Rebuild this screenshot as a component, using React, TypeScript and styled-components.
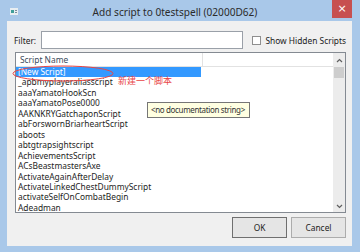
import React from "react";
import styled, { createGlobalStyle } from "styled-components";

const GlobalStyle = createGlobalStyle`
  html, body { margin: 0; padding: 0; background: #a9c8e9; }
  body { font-family: "Noto Sans", "Liberation Sans", sans-serif; }
`;

const scripts = [
  "_apbmyplayeraliasscript",
  "aaaYamatoHookScn",
  "aaaYamatoPose0000",
  "AAKNKRYGatchaponScript",
  "abForswornBriarheartScript",
  "aboots",
  "abtgtrapsightscript",
  "AchievementsScript",
  "ACsBeastmastersAxe",
  "ActivateAgainAfterDelay",
  "ActivateLinkedChestDummyScript",
  "activateSelfOnCombatBegin",
  "Adeadman",
];

// Window frame
const Window = styled.div`
  position: relative;
  width: 360px;
  height: 252px;
  box-sizing: border-box;
  padding: 0 8px 6px 7px;
  background: #a9c8e9;
  display: flex;
  flex-direction: column;
`;

const TitleBar = styled.div`
  height: 21px;
  display: flex;
  align-items: flex-start;
  position: relative;
`;

const TitleIcon = styled.svg`
  margin: 8px 0 0 3px;
`;

const TitleText = styled.div`
  flex: 1;
  text-align: center;
  font-size: 10.1px;
  line-height: 12px;
  margin-top: 6px;
  color: #2b2b2b;
  white-space: nowrap;
`;

const CloseButton = styled.div`
  width: 20px;
  height: 18px;
  background: #c75050;
  color: #fff;
  font-size: 11px;
  line-height: 17px;
  text-align: center;
  font-family: "DejaVu Sans", sans-serif;
`;

const Client = styled.div`
  flex: 1;
  background: #f0f0f0;
  padding: 10px 6px 8px 8px;
  display: flex;
  flex-direction: column;
  position: relative;
`;

const FilterRow = styled.div`
  height: 18px;
  display: flex;
  align-items: center;
  white-space: nowrap;
`;

const Label = styled.span`
  font-size: 8.4px;
  color: #222;
  margin-left: -1px;
  width: 28px;
`;

const FilterInput = styled.div`
  width: 206px;
  height: 18px;
  box-sizing: border-box;
  border: 1px solid #9aa0a8;
  background: #fff;
`;

const CheckBox = styled.div`
  width: 9px;
  height: 9px;
  box-sizing: border-box;
  border: 1px solid #8f8f8f;
  background: #fff;
  margin-left: 9px;
  flex-shrink: 0;
`;

const CheckLabel = styled.span`
  font-size: 8.4px;
  color: #222;
  margin-left: 4px;
`;

const List = styled.div`
  margin-top: 3px;
  height: 161px;
  box-sizing: border-box;
  border: 1px solid #848a92;
  background: #fff;
  display: grid;
  grid-template-columns: 1fr 12px;
  overflow: hidden;
`;

const ListBody = styled.div`
  display: flex;
  flex-direction: column;
`;

const Header = styled.div`
  height: 14px;
  box-sizing: border-box;
  border-bottom: 1px solid #e2e2e2;
  display: flex;
`;

const HeaderCell = styled.div`
  width: 182px;
  border-right: 1px solid #e2e2e2;
  font-size: 8.4px;
  line-height: 13px;
  color: #3b4a5c;
  padding-left: 4px;
`;

const Row = styled.div<{ $selected?: boolean }>`
  width: 183px;
  height: 10.46px;
  font-size: 8.4px;
  line-height: 10.46px;
  padding-left: 2px;
  white-space: nowrap;
  color: ${(p) => (p.$selected ? "#fff" : "#1e1e1e")};
  background: ${(p) => (p.$selected ? "#3399ff" : "transparent")};
`;

const ScrollBar = styled.div`
  background: #ececec;
  display: flex;
  flex-direction: column;
  align-items: center;
`;

const Arrow = styled.div`
  height: 14px;
  display: flex;
  align-items: center;
  justify-content: center;
`;

const Thumb = styled.div`
  width: 10px;
  height: 11px;
  background: #cdcdcd;
`;

const Spacer = styled.div`
  flex: 1;
`;

const ButtonRow = styled.div`
  margin-top: 4px;
  display: flex;
  justify-content: flex-end;
  gap: 4px;
`;

const Button = styled.div<{ $default?: boolean }>`
  width: 55px;
  height: 21px;
  box-sizing: border-box;
  border: 1px solid ${(p) => (p.$default ? "#6f6f6f" : "#acacac")};
  background: #e5e5e5;
  font-size: 8.4px;
  line-height: 19px;
  text-align: center;
  color: #222;
`;

const Tooltip = styled.div`
  position: absolute;
  left: 140px;
  top: 81px;
  width: 103px;
  height: 16px;
  box-sizing: border-box;
  border: 1px solid #767676;
  background: #ffffe1;
  font-size: 8px;
  letter-spacing: -0.35px;
  line-height: 14px;
  padding-left: 3px;
  color: #333;
  white-space: nowrap;
`;

const Annotation = styled.svg`
  position: absolute;
  left: 5px;
  top: 44px;
`;

const Note = styled.span`
  position: absolute;
  left: 111px;
  top: 54px;
  font-size: 9px;
  line-height: 11px;
  color: #e84545;
  font-family: "Noto Sans CJK SC", sans-serif;
  white-space: nowrap;
`;

export default function App() {
  return (
    <>
      <GlobalStyle />
      <Window>
        <TitleBar>
          <TitleIcon width="8" height="7" viewBox="0 0 8 7">
            <rect x="0" y="0" width="8" height="7" fill="#e8eef2" />
            <rect x="1" y="2" width="3" height="3" fill="#3f9f9a" />
            <rect x="5" y="2" width="2" height="1" fill="#7a8c9a" />
            <rect x="5" y="4" width="2" height="1" fill="#7a8c9a" />
          </TitleIcon>
          <TitleText>Add script to 0testspell (02000D62)</TitleText>
          <CloseButton>×</CloseButton>
        </TitleBar>
        <Client>
          <FilterRow>
            <Label>Filter:</Label>
            <FilterInput />
            <CheckBox />
            <CheckLabel>Show Hidden Scripts</CheckLabel>
          </FilterRow>
          <List>
            <ListBody>
              <Header>
                <HeaderCell>Script Name</HeaderCell>
              </Header>
              <Row $selected>[New Script]</Row>
              {scripts.map((s) => (
                <Row key={s}>{s}</Row>
              ))}
            </ListBody>
            <ScrollBar>
              <Arrow>
                <svg width="7" height="5" viewBox="0 0 7 5">
                  <path d="M1 4 L3.5 1.5 L6 4" stroke="#606060" strokeWidth="1.2" fill="none" />
                </svg>
              </Arrow>
              <Thumb />
              <Spacer />
              <Arrow>
                <svg width="7" height="5" viewBox="0 0 7 5">
                  <path d="M1 1 L3.5 3.5 L6 1" stroke="#606060" strokeWidth="1.2" fill="none" />
                </svg>
              </Arrow>
            </ScrollBar>
          </List>
          <ButtonRow>
            <Button $default>OK</Button>
            <Button>Cancel</Button>
          </ButtonRow>
          <Annotation width="102" height="17" viewBox="0 0 102 17">
            <ellipse cx="51" cy="8.5" rx="50" ry="7.5" stroke="#e84545" strokeWidth="1" fill="none" />
          </Annotation>
          <Note>新建一个脚本</Note>
          <Tooltip>&lt;no documentation string&gt;</Tooltip>
        </Client>
      </Window>
    </>
  );
}
